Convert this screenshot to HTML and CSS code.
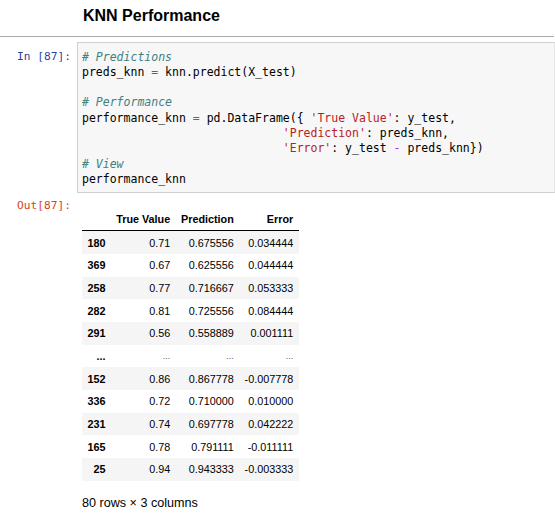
FILE: index.html
```html
<!DOCTYPE html>
<html>
<head>
<meta charset="utf-8">
<link rel="stylesheet" href="styles.css">
</head>
<body>
<div class="md-cell">
  <h2 class="md-title">KNN Performance</h2>
</div>
<div class="rule"></div>
<div class="cell">
  <div class="prompt in-prompt">In&nbsp;[87]:</div>
  <div class="code-box"><pre class="code"><span class="c"># Predictions</span>
preds_knn <span class="o">=</span> knn.predict(X_test)

<span class="c"># Performance</span>
performance_knn <span class="o">=</span> pd.DataFrame({ <span class="s">'True Value'</span>: y_test,
                             <span class="s">'Prediction'</span>: preds_knn,
                             <span class="s">'Error'</span>: y_test <span class="o">-</span> preds_knn})
<span class="c"># View</span>
performance_knn</pre></div>
</div>
<div class="cell out-cell">
  <div class="prompt out-prompt">Out[87]:</div>
  <div class="output">
    <table class="df">
      <thead>
        <tr><th></th><th>True Value</th><th>Prediction</th><th>Error</th></tr>
      </thead>
      <tbody>
        <tr><th>180</th><td>0.71</td><td>0.675556</td><td>0.034444</td></tr>
        <tr><th>369</th><td>0.67</td><td>0.625556</td><td>0.044444</td></tr>
        <tr><th>258</th><td>0.77</td><td>0.716667</td><td>0.053333</td></tr>
        <tr><th>282</th><td>0.81</td><td>0.725556</td><td>0.084444</td></tr>
        <tr><th>291</th><td>0.56</td><td>0.558889</td><td>0.001111</td></tr>
        <tr class="ell"><th>...</th><td>...</td><td>...</td><td>...</td></tr>
        <tr><th>152</th><td>0.86</td><td>0.867778</td><td>-0.007778</td></tr>
        <tr><th>336</th><td>0.72</td><td>0.710000</td><td>0.010000</td></tr>
        <tr><th>231</th><td>0.74</td><td>0.697778</td><td>0.042222</td></tr>
        <tr><th>165</th><td>0.78</td><td>0.791111</td><td>-0.011111</td></tr>
        <tr><th>25</th><td>0.94</td><td>0.943333</td><td>-0.003333</td></tr>
      </tbody>
    </table>
    <p class="shape">80 rows × 3 columns</p>
  </div>
</div>
</body>
</html>
```

FILE: styles.css
```css
html, body {
  margin: 0;
  padding: 0;
  background: #fff;
  overflow: hidden;
}
body {
  font-family: "Liberation Sans", Arial, sans-serif;
  color: #000;
  width: 555px;
}
.md-cell {
  padding-left: 83px;
  height: 36px;
  box-sizing: border-box;
  padding-top: 7px;
}
.md-title {
  margin: 0;
  font-size: 16px;
  font-weight: bold;
  line-height: 18px;
}
.rule {
  border-top: 1px solid #aaa;
  margin-right: 1px;
}
.cell {
  display: flex;
  align-items: flex-start;
  margin-top: 5px;
}
.prompt {
  width: 77px;
  flex: none;
  box-sizing: border-box;
  padding-right: 6px;
  text-align: right;
  font-family: "DejaVu Sans Mono", monospace;
  font-size: 11.2px;
  line-height: 15.25px;
}
.in-prompt {
  color: #303f9f;
  padding-top: 7px;
}
.out-prompt {
  color: #d84315;
}
.code-box {
  flex: 1;
  background: #f7f7f7;
  border: 1px solid #cfcfcf;
  border-right: 1px solid #e4e4e4;
  padding: 6.5px 4px 4.5px 4px;
}
.code {
  margin: 0;
  font-family: "DejaVu Sans Mono", monospace;
  font-size: 11.5px;
  line-height: 15.3px;
  color: #000;
  white-space: pre;
}
.c { color: #408080; font-style: italic; }
.o { color: #aa22ff; }
.s { color: #ba2121; }
.out-cell {
  margin-top: 5px;
}
.output {
  padding-left: 5px;
  padding-top: 10px;
}
.df {
  border-collapse: collapse;
  border-spacing: 0;
  font-size: 10.8px;
  font-family: "Liberation Sans", Arial, sans-serif;
}
.df th, .df td {
  text-align: right;
  vertical-align: middle;
  padding: 5.2px 5.4px;
  line-height: 12.3px;
  white-space: nowrap;
}
.df thead th {
  font-weight: bold;
  border-bottom: 1px solid #000;
}
.df tbody th {
  font-weight: bold;
}
.df tbody tr:nth-child(odd) {
  background: #f5f5f5;
}
.df tr.ell td {
  color: #556;
  font-size: 9px;
}
.shape {
  margin: 14px 0 0 0;
  font-size: 12.6px;
  line-height: 16px;
}
```
